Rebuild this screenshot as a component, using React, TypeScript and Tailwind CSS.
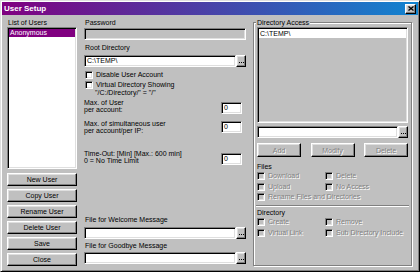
import React from "react";

const SUNKEN =
  "border border-t-[#808080] border-l-[#808080] border-b-white border-r-white shadow-[inset_1px_1px_0_#000,inset_-1px_-1px_0_#dfdfdf]";
const RAISED =
  "border border-t-white border-l-white border-b-black border-r-black shadow-[inset_-1px_-1px_0_#808080,inset_1px_1px_0_#dfdfdf]";
const DIS = "text-[#808080] [text-shadow:1px_1px_0_#fff]";

function Btn({
  children,
  disabled,
  className = "",
}: {
  children: React.ReactNode;
  disabled?: boolean;
  className?: string;
}) {
  return (
    <div
      className={`${RAISED} bg-[#c0c0c0] flex items-center justify-center text-[7px] leading-none ${
        disabled ? DIS : "text-black"
      } ${className}`}
    >
      {children}
    </div>
  );
}

function Dots() {
  return (
    <div
      className={`${RAISED} bg-[#c0c0c0] w-[10px] h-full flex items-end justify-center pb-[3px]`}
    >
      <svg width="5" height="1" viewBox="0 0 5 1">
        <rect x="0" y="0" width="1" height="1" fill="#000" />
        <rect x="2" y="0" width="1" height="1" fill="#000" />
        <rect x="4" y="0" width="1" height="1" fill="#000" />
      </svg>
    </div>
  );
}

function Check({ label, disabled }: { label: string; disabled?: boolean }) {
  return (
    <div className="flex items-center h-[8px] gap-[3px]">
      <div
        className={`${SUNKEN} w-[8px] h-[8px] shrink-0 ${
          disabled ? "bg-[#c0c0c0]" : "bg-white"
        }`}
      />
      <span className={`text-[7px] leading-[8px] whitespace-nowrap ${disabled ? DIS : ""}`}>
        {label}
      </span>
    </div>
  );
}

function NumField() {
  return (
    <div
      className={`${SUNKEN} bg-white w-[21px] h-[12px] text-[7px] leading-[10px] pl-[2px] shrink-0`}
    >
      0
    </div>
  );
}

export default function App() {
  return (
    <div className="w-[420px] h-[272px] bg-[#c0c0c0] border border-t-[#dfdfdf] border-l-[#dfdfdf] border-b-black border-r-black shadow-[inset_1px_1px_0_#fff,inset_-1px_-1px_0_#808080] p-[1px] flex flex-col font-['Liberation_Sans',Arial,sans-serif] text-[7px] text-black overflow-hidden">
      {/* Title bar */}
      <div className="h-[13px] shrink-0 flex items-center justify-between bg-[linear-gradient(to_right,#800080,#1084d0)] pl-[2px] pr-[2px]">
        <span className="text-white font-bold text-[8px] leading-[13px]">User Setup</span>
        <div className={`${RAISED} bg-[#c0c0c0] w-[11px] h-[10px] flex items-center justify-center`}>
          <svg width="6" height="5" viewBox="0 0 6 5">
            <path d="M0.5 0.5 L5.5 4.5 M5.5 0.5 L0.5 4.5" stroke="#000" strokeWidth="1.3" />
          </svg>
        </div>
      </div>

      {/* Body */}
      <div className="flex flex-1 pt-[3px] pl-[5px]">
        {/* Left column */}
        <div className="w-[70px] flex flex-col shrink-0">
          <div className="h-[9px] leading-[9px] pl-[1px]">List of Users</div>
          <div className={`${SUNKEN} bg-white h-[142px] p-[1px]`}>
            <div className="h-[8px] leading-[8px] bg-[#800080] text-white pl-[1px]">Anonymous</div>
          </div>
          <div className="mt-[4px] flex flex-col gap-[3px]">
            <Btn className="h-[13px]">New User</Btn>
            <Btn className="h-[13px]">Copy User</Btn>
            <Btn className="h-[13px]">Rename User</Btn>
            <Btn className="h-[13px]">Delete User</Btn>
            <Btn className="h-[13px]">Save</Btn>
            <Btn className="h-[13px]">Close</Btn>
          </div>
        </div>

        {/* Middle column */}
        <div className="ml-[7px] w-[162px] flex flex-col shrink-0">
          <div className="h-[9px] leading-[9px] pl-[1px]">Password</div>
          <div className={`${SUNKEN} bg-[#c0c0c0] h-[12px] mt-[1px]`} />
          <div className="h-[8px] leading-[8px] mt-[4px] pl-[1px]">Root Directory</div>
          <div className="flex h-[12px] mt-[3px]">
            <div className={`${SUNKEN} bg-white flex-1 text-[7px] leading-[10px] pl-[2px]`}>C:\TEMP\</div>
            <Dots />
          </div>
          <div className="mt-[4px] pl-[1px]">
            <Check label="Disable User Account" />
          </div>
          <div className="mt-[2px] pl-[1px]">
            <Check label="Virtual Directory Showing" />
          </div>
          <div className="h-[8px] leading-[8px] pl-[11px]">"/C:/Directory/" = "/"</div>

          <div className="flex justify-between mt-[2px] pr-[4px]">
            <div className="leading-[7px]">
              Max. of User
              <br />
              per account:
            </div>
            <div className="mt-[3px]">
              <NumField />
            </div>
          </div>

          <div className="flex justify-between mt-[6px] pr-[4px]">
            <div className="leading-[7px]">
              Max. of simultaneous user
              <br />
              per account/per IP:
            </div>
            <div className="mt-[1px]">
              <NumField />
            </div>
          </div>

          <div className="flex justify-between mt-[16px] pr-[4px]">
            <div className="leading-[7px]">
              Time-Out: [Min] [Max.: 600 min]
              <br />0 = No Time Limit
            </div>
            <div className="mt-[3px]">
              <NumField />
            </div>
          </div>

          <div className="h-[8px] leading-[8px] mt-[51px] pl-[1px]">File for Welcome Message</div>
          <div className="flex h-[12px] mt-[3px]">
            <div className={`${SUNKEN} bg-white flex-1`} />
            <Dots />
          </div>
          <div className="h-[8px] leading-[8px] mt-[3px] pl-[1px]">File for Goodbye Message</div>
          <div className="flex h-[12px] mt-[2px]">
            <div className={`${SUNKEN} bg-white flex-1`} />
            <Dots />
          </div>
        </div>

        {/* Right group */}
        <fieldset className="ml-[7px] w-[159px] h-[248px] shrink-0 border border-[#808080] shadow-[inset_1px_1px_0_#fff,1px_1px_0_#fff] px-[3px]">
          <legend className="h-[9px] leading-[9px] px-[1px] -ml-[1px] bg-[#c0c0c0]">Directory Access</legend>
          <div className="flex flex-col">
            <div className={`${SUNKEN} bg-[#c0c0c0] h-[96px] p-[1px]`}>
              <div className="h-[9px] leading-[9px] bg-white pl-[1px]">C:\TEMP\</div>
            </div>
            <div className="flex h-[12px] mt-[3px]">
              <div className={`${SUNKEN} bg-white flex-1`} />
              <Dots />
            </div>
            <div className="flex justify-between h-[14px] mt-[5px]">
              <Btn disabled className="w-[44px]">Add</Btn>
              <Btn disabled className="w-[44px]">Modify</Btn>
              <Btn disabled className="w-[44px]">Delete</Btn>
            </div>
            <div className="h-[8px] leading-[8px] mt-[6px]">Files</div>
            <div className="grid grid-cols-[68px_1fr] gap-y-[2.5px] mt-[1px]">
              <Check disabled label="Download" />
              <Check disabled label="Delete" />
              <Check disabled label="Upload" />
              <Check disabled label="No Access" />
              <div className="col-span-2">
                <Check disabled label="Rename Files and Directories" />
              </div>
            </div>
            <div className="h-[2px] mt-[4px] -mx-[1px] border-t border-t-[#808080] border-b border-b-white" />
            <div className="h-[8px] leading-[8px] mt-[2px]">Directory</div>
            <div className="grid grid-cols-[68px_1fr] gap-y-[3px] mt-[1px]">
              <Check disabled label="Create" />
              <Check disabled label="Remove" />
              <Check disabled label="Virtual Link" />
              <Check disabled label="Sub Directory Include" />
            </div>
          </div>
        </fieldset>
      </div>
    </div>
  );
}
